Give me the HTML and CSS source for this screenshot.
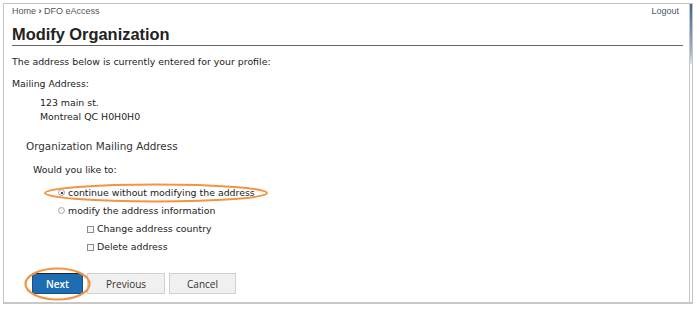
FILE: index.html
```html
<!DOCTYPE html>
<html lang="en">
<head>
<meta charset="utf-8">
<title>Modify Organization</title>
<link rel="stylesheet" href="styles.css">
</head>
<body>
<div class="frame">
  <div class="main">
    <div class="topbar">
      <span class="crumbs">Home <b class="sep">&#8250;</b> DFO eAccess</span>
      <span class="logout">Logout</span>
    </div>
    <h1 class="title">Modify Organization</h1>
    <p class="intro">The address below is currently entered for your profile:</p>
    <p class="label">Mailing Address:</p>
    <div class="addr">123 main st.<br>Montreal QC H0H0H0</div>
    <div class="group">
      <div class="legend">Organization Mailing Address</div>
      <div class="question">Would you like to:</div>
      <div class="opts">
        <div class="opt radio-row"><span class="radio checked"></span>continue without modifying the address</div>
        <div class="opt radio-row"><span class="radio"></span>modify the address information</div>
        <div class="opt check-row"><span class="check"></span>Change address country</div>
        <div class="opt check-row"><span class="check"></span>Delete address</div>
      </div>
    </div>
    <div class="buttons">
      <button class="btn primary">Next</button>
      <button class="btn prev">Previous</button>
      <button class="btn cancel">Cancel</button>
    </div>
  </div>
  <div class="scroll"><div class="thumb"></div></div>
  <svg class="marks" width="700" height="313" viewBox="0 0 700 313">
    <ellipse cx="156" cy="193" rx="111" ry="8.5" fill="none" stroke="#f29440" stroke-width="2"/>
    <ellipse cx="57.5" cy="284" rx="32" ry="15.5" fill="none" stroke="#f29440" stroke-width="2.2"/>
  </svg>
</div>
</body>
</html>
```
FILE: styles.css
```css
* { box-sizing: border-box; }
html, body { margin: 0; padding: 0; background: #fff; }
body { font-family: "DejaVu Sans", Verdana, sans-serif; font-size: 9.4px; color: #222; }

.frame {
  position: relative;
  margin: 3px 0 0 3px;
  width: 690px;
  height: 301px;
  border: 1px solid #c4c4c4;
  border-bottom: 2px solid #c8c8c8;
  display: flex;
}
.main { flex: 1; padding: 0 6px 0 8px; }

.topbar {
  display: flex;
  justify-content: space-between;
  height: 14px;
  line-height: 14px;
  font-family: "Liberation Sans", Arial, sans-serif;
  font-size: 9px;
  color: #555;
  padding-right: 4px;
}
.sep { font-weight: bold; color: #444; }
.logout { color: #4b5670; }

.title {
  margin: 6px 0 0;
  font-family: "Liberation Sans", Arial, sans-serif;
  font-size: 16.4px;
  font-weight: bold;
  line-height: 20px;
  color: #222;
  padding-bottom: 1px;
  border-bottom: 1px solid #666;
}
.intro { margin: 9px 0 0; line-height: 14px; }
.label { margin: 8px 0 0; line-height: 14px; }
.addr { margin-top: 5px; padding-left: 28px; line-height: 14px; }

.group { margin-top: 14px; }
.legend { padding-left: 14px; font-size: 10.4px; line-height: 16px; color: #333; }
.question { margin-top: 9px; padding-left: 21px; line-height: 14px; }
.opts { margin-top: 8.5px; display: flex; flex-direction: column; gap: 4.3px; }
.opt { display: flex; align-items: center; height: 14px; line-height: 14px; }
.radio-row { padding-left: 46px; }
.check-row { padding-left: 75px; }

.radio {
  width: 7px; height: 7px;
  border: 1px solid #a8a8a8;
  border-radius: 50%;
  background: #f4f4f4;
  margin-right: 3px;
  position: relative;
}
.radio.checked::after {
  content: "";
  position: absolute;
  left: 1.5px; top: 1.5px;
  width: 2px; height: 2px;
  border-radius: 50%;
  background: #111;
}
.check {
  width: 7px; height: 7px;
  border: 1px solid #8a8a8a;
  background: #f6f6f6;
  margin-right: 3px;
}

.buttons { margin-top: 19px; padding-left: 20px; display: flex; gap: 4px; }
.btn {
  height: 21px;
  font-family: "Open Sans", sans-serif;
  font-size: 10px;
  color: #333;
  background: #f0f0f0;
  border: 1px solid #d0d0d0;
  padding: 0;
  margin: 0;
}
.primary {
  width: 51px;
  background: #1e6db2;
  border: 1px solid #174f88;
  border-top-color: #222;
  color: #fff;
  font-weight: 600;
}
.prev { width: 78px; }
.cancel { width: 67px; }

.scroll { width: 3px; border-left: 1px solid #c8c8c8; }
.thumb { width: 2px; height: 60px; background: linear-gradient(#3f6590, #9fb4cc 80%, #e0e6ee); }

.marks { position: absolute; left: -4px; top: -4px; pointer-events: none; }
```
